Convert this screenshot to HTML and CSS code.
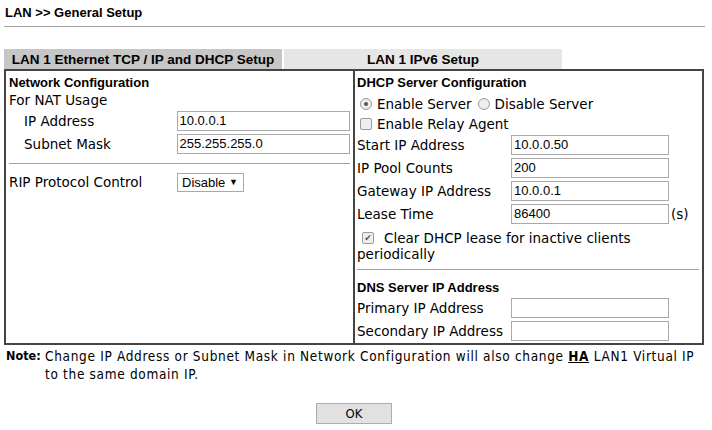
FILE: index.html
```html
<!DOCTYPE html>
<html>
<head>
<meta charset="utf-8">
<link rel="stylesheet" href="styles.css">
</head>
<body>
<div class="page">
  <div class="title">LAN &gt;&gt; General Setup</div>
  <div class="rule"></div>
  <div class="tabs">
    <div class="tab active">LAN 1 Ethernet TCP / IP and DHCP Setup</div>
    <div class="tab">LAN 1 IPv6 Setup</div>
  </div>
  <div class="box">
    <div class="col left">
      <div class="head">Network Configuration</div>
      <div class="line">For NAT Usage</div>
      <div class="row indent"><span class="lbl">IP Address</span><span class="inp wide">10.0.0.1</span></div>
      <div class="row indent"><span class="lbl">Subnet Mask</span><span class="inp wide">255.255.255.0</span></div>
      <div class="sep lsep"></div>
      <div class="row rip"><span class="lbl">RIP Protocol Control</span><span class="sel">Disable <span class="arrow">▼</span></span></div>
    </div>
    <div class="col right">
      <div class="head rhead">DHCP Server Configuration</div>
      <div class="line opts">
        <span class="radio on"></span><span class="optl">Enable Server</span>
        <span class="radio second"></span><span class="optl">Disable Server</span>
      </div>
      <div class="line opts relay"><span class="check"></span><span class="optl">Enable Relay Agent</span></div>
      <div class="row"><span class="lbl r">Start IP Address</span><span class="inp">10.0.0.50</span></div>
      <div class="row"><span class="lbl r">IP Pool Counts</span><span class="inp">200</span></div>
      <div class="row"><span class="lbl r">Gateway IP Address</span><span class="inp">10.0.0.1</span></div>
      <div class="row"><span class="lbl r">Lease Time</span><span class="inp">86400</span><span class="unit">(s)</span></div>
      <div class="clear"><span class="check on">✔</span><span class="cleart">Clear DHCP lease for inactive clients</span></div>
      <div class="line periodic">periodically</div>
      <div class="sep rsep"></div>
      <div class="head dns">DNS Server IP Address</div>
      <div class="row"><span class="lbl r">Primary IP Address</span><span class="inp"></span></div>
      <div class="row"><span class="lbl r">Secondary IP Address</span><span class="inp"></span></div>
    </div>
  </div>
  <div class="note">
    <span class="notek">Note:</span>
    <span class="notet">Change IP Address or Subnet Mask in Network Configuration will also change <u class="ha">HA</u> LAN1 Virtual IP to the same domain IP.</span>
  </div>
  <div class="actions"><span class="btn">OK</span></div>
</div>
</body>
</html>
```
FILE: styles.css
```css
html, body { margin: 0; padding: 0; background: #fff; }
body { font-family: "DejaVu Sans", Verdana, sans-serif; font-size: 13.5px; color: #000; }
.page { width: 700px; padding: 0 0 0 4px; }
.title { font-family: "Liberation Sans", Arial, sans-serif; font-weight: bold; font-size: 13px; height: 26px; line-height: 26px; padding-left: 1px; }
.rule { height: 1px; background: #a0a0a0; width: 701px; }
.tabs { display: flex; gap: 2px; margin-top: 22px; height: 20px; }
.tab { width: 278px; background: #e6e6e6; text-align: center; font-family: "Liberation Sans", Arial, sans-serif; font-weight: bold; font-size: 13.5px; line-height: 21px; }
.tab.active { background: #c6c6c6; }
.box { display: flex; border: 2px solid #444; width: 696px; }
.col { padding: 3px 3px 1px 3px; box-sizing: border-box; }
.col.left { width: 349px; border-right: 2px solid #444; }
.col.right { width: 347px; padding-left: 2px; }
.head { font-family: "Liberation Sans", Arial, sans-serif; font-weight: bold; font-size: 13px; height: 17px; line-height: 17px; }
.rhead { height: 19px; }
.line { height: 18px; line-height: 18px; }
.row { display: flex; align-items: center; height: 23px; }
.lbl { width: 168px; white-space: nowrap; }
.indent .lbl { width: 153px; padding-left: 15px; }
.lbl.r { width: 154px; }
.inp { display: inline-block; width: 154px; height: 18px; border: 1px solid #a9a9a9; font-family: "Liberation Sans", Arial, sans-serif; font-size: 13px; line-height: 18px; padding-left: 2px; box-sizing: content-box; }
.inp.wide { width: 170px; }
.unit { margin-left: 2px; }
.sep { height: 1px; background: #a0a0a0; }
.lsep { margin: 8px 0 4px 0; }
.rsep { margin: 7px 0 0 0; }
.rip { height: 28px; }
.sel { display: inline-block; height: 17px; line-height: 17px; border: 1px solid #a9a9a9; padding: 0 5px 0 4px; font-family: "Liberation Sans", Arial, sans-serif; font-size: 13px; }
.arrow { font-size: 9px; vertical-align: 2px; }
.opts { display: flex; align-items: center; height: 21px; }
.relay { height: 19px; }
.radio { width: 12px; height: 12px; border: 1px solid #9a9a9a; border-radius: 50%; background: #eeeeee; box-sizing: border-box; margin: 0 5px 0 3px; position: relative; }
.radio.on::after { content: ""; position: absolute; left: 3px; top: 3px; width: 4px; height: 4px; border-radius: 50%; background: #555; }
.radio.second { margin-left: 6px; }
.check { width: 12px; height: 12px; border: 1px solid #9a9a9a; border-radius: 2px; background: #eeeeee; box-sizing: border-box; margin: 0 5px 0 3px; display: inline-flex; align-items: center; justify-content: center; font-size: 9px; color: #555; line-height: 1; }
.clear { display: flex; align-items: center; height: 18px; margin-top: 4px; }
.clear .check { margin-left: 5px; margin-right: 10px; }
.periodic { height: 15px; line-height: 14px; }
.dns { margin-top: 9px; }
.note { display: flex; margin-top: 2px; font-family: "DejaVu Sans Condensed", "DejaVu Sans", sans-serif; font-size: 13.5px; line-height: 18px; }
.notek { width: 39px; flex: none; font-weight: bold; padding-left: 2px; font-size: 12.5px; }
.notet { width: 662px; letter-spacing: 0.68px; }
.ha { font-weight: bold; }
.actions { display: flex; justify-content: center; margin-top: 20px; }
.btn { display: inline-block; width: 74px; height: 19px; border: 1px solid #adadad; background: #e1e1e1; text-align: center; line-height: 19px; font-family: "DejaVu Sans Condensed", "DejaVu Sans", sans-serif; font-size: 13px; }
```
